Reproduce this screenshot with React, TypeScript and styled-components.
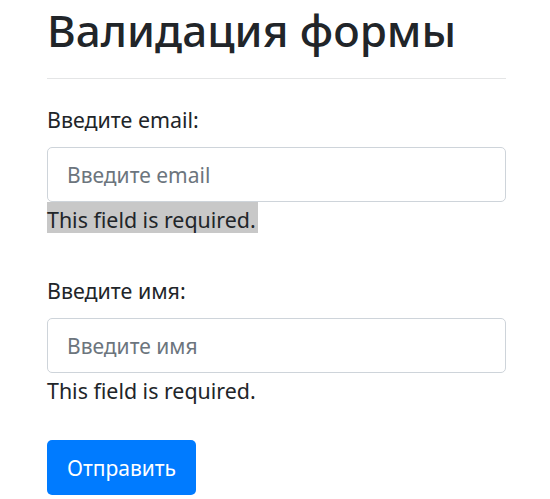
import styled, { createGlobalStyle } from "styled-components";

const GlobalStyle = createGlobalStyle`
    html, body {
        margin: 0;
        padding: 0;
        background: #ffffff;
    }

    body {
        font-family: "Noto Sans", "Open Sans", sans-serif;
        color: #212529;
    }

    * {
        box-sizing: border-box;
    }
`;

const Page = styled.div`
    width: 459px;
    margin-left: 47px;
    display: flex;
    flex-direction: column;
`;

const Title = styled.h1`
    margin: 0;
    padding-top: 4px;
    font-size: 44px;
    font-weight: 500;
    line-height: 52px;
    color: #212529;
`;

const Divider = styled.hr`
    margin: 22px 0 0;
    border: 0;
    border-top: 1px solid #e4e5e6;
    height: 0;
`;

const Form = styled.form`
    display: flex;
    flex-direction: column;
    padding-top: 25px;
`;

const Field = styled.div<{
    $last?: boolean;
}>`
    display: flex;
    flex-direction: column;
    margin-bottom: ${({ $last }) =>
        $last
            ? "36px"
            : "42px"};
`;

const Label = styled.label`
    font-size: 21.4px;
    line-height: 31px;
    margin-bottom: 12px;
`;

const Input = styled.input`
    width: 100%;
    height: 55px;
    padding: 0 19px;
    border: 1px solid #ced4da;
    border-radius: 5px;
    font-family: inherit;
    font-size: 21px;
    color: #495057;
    background: #ffffff;
    outline: none;

    &::placeholder {
        color: #6c757d;
    }
`;

const ErrorLine = styled.div`
    display: flex;
    height: 31px;
    font-size: 21.4px;
`;

const ErrorText = styled.span<{
    $selected?: boolean;
}>`
    display: block;
    height: 31px;
    padding: 4px 2px 0 0;
    line-height: 27px;
    background: ${({ $selected }) =>
        $selected
            ? "#c8c8c8"
            : "transparent"};
`;

const SubmitButton = styled.button`
    align-self: flex-start;
    width: 149px;
    height: 55px;
    padding: 0;
    border: 0;
    border-radius: 5px;
    background: #007bff;
    color: #ffffff;
    font-family: inherit;
    font-size: 21px;
`;

const fields = [
    {
        id: "email",
        label: "Введите email:",
        placeholder: "Введите email",
        selected: true,
    },
    {
        id: "name",
        label: "Введите имя:",
        placeholder: "Введите имя",
        selected: false,
    },
];

export default function App() {
    return (
        <>
            <GlobalStyle />
            <Page>
                <Title>Валидация формы</Title>
                <Divider />
                <Form
                    onSubmit={(e) =>
                        e.preventDefault()
                    }
                >
                    {fields.map((field, index) => (
                        <Field
                            key={field.id}
                            $last={
                                index ===
                                fields.length - 1
                            }
                        >
                            <Label htmlFor={field.id}>
                                {field.label}
                            </Label>
                            <Input
                                id={field.id}
                                placeholder={
                                    field.placeholder
                                }
                            />
                            <ErrorLine>
                                <ErrorText
                                    $selected={
                                        field.selected
                                    }
                                >
                                    This field is required.
                                </ErrorText>
                            </ErrorLine>
                        </Field>
                    ))}
                    <SubmitButton type="submit">
                        Отправить
                    </SubmitButton>
                </Form>
            </Page>
        </>
    );
}
